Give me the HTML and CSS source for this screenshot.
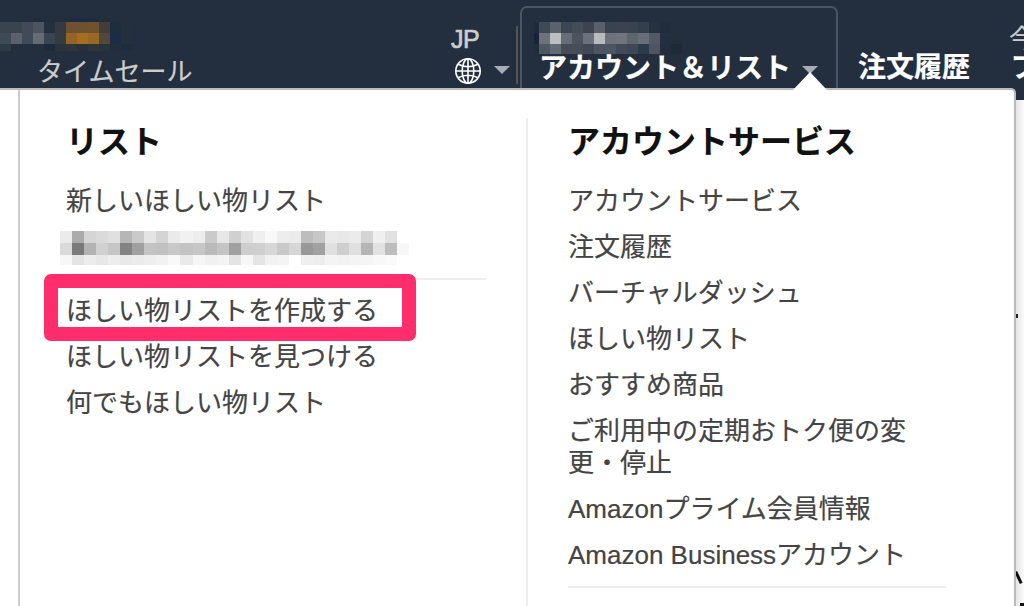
FILE: index.html
```html
<!DOCTYPE html>
<html lang="ja">
<head>
    <meta charset="UTF-8">
    <meta name="viewport" content="width=device-width, initial-scale=1.0">
    <title>アカウント&#xFF06;リスト</title>
    <link rel="stylesheet" href="styles.css">
</head>
<body>
    <header class="nav">
        <div class="nav-left">
            <div class="mosaic mosaic-name"></div>
            <a href="#">タイムセール</a>
        </div>
        <div class="nav-lang">
            <span>JP</span>
            <div class="globe">
                <svg width="28" height="28" viewBox="0 0 28 28">
                    <circle cx="14" cy="14" r="12.2"/>
                    <ellipse cx="14" cy="14" rx="5.8" ry="12.2"/>
                    <path d="M14 1.8v24.4M1.8 14h24.4M4 7.2q10 5 20 0M4 20.8q10-5 20 0"/>
                </svg>
                <i class="arrow"></i>
            </div>
        </div>
        <div class="nav-line"></div>
        <div class="nav-account">
            <div class="mosaic mosaic-user"></div>
            <a href="#">アカウント&#xFF06;リスト</a>
            <i class="arrow"></i>
        </div>
        <a class="nav-orders" href="#">注文履歴</a>
        <div class="nav-prime">
            <span>今</span>
            <a href="#">プ</a>
        </div>
    </header>

    <div class="page-behind">
        <span class="dot"></span>
        <span class="stroke"></span>
        <span class="stroke-end"></span>
    </div>

    <div class="flyout">
        <i class="flyout-arrow"></i>
        <div class="columns">
            <div class="column lists">
                <h2>リスト</h2>
                <ul>
                    <li><a href="#">新しいほしい物リスト</a></li>
                    <li><div class="mosaic mosaic-list"></div></li>
                </ul>
                <hr>
                <ul>
                    <li class="marked"><a href="#">ほしい物リストを作成する</a></li>
                    <li><a href="#">ほしい物リストを見つける</a></li>
                    <li><a href="#">何でもほしい物リスト</a></li>
                </ul>
            </div>
            <div class="column services">
                <h2>アカウントサービス</h2>
                <ul>
                    <li><a href="#">アカウントサービス</a></li>
                    <li><a href="#">注文履歴</a></li>
                    <li><a href="#">バーチャルダッシュ</a></li>
                    <li><a href="#">ほしい物リスト</a></li>
                    <li><a href="#">おすすめ商品</a></li>
                    <li><a href="#">ご利用中の定期おトク便の変更・停止</a></li>
                    <li><a href="#">Amazonプライム会員情報</a></li>
                    <li><a href="#">Amazon Businessアカウント</a></li>
                </ul>
                <hr>
            </div>
        </div>
    </div>

    <script src="script.js"></script>
</body>
</html>
```
FILE: styles.css
```css
*, *::after {
    box-sizing: border-box;
    margin: 0;
    padding: 0;
}
body {
    position: relative;
    height: 606px;
    overflow: hidden;
    background: #fff;
    color: #444;
    font: 26px/32px "Liberation Sans", "Noto Sans CJK JP", sans-serif;
    -webkit-text-stroke: .2px;
}
a {
    color: inherit;
    text-decoration: none;
}
ul {
    list-style: none;
}
.nav {
    display: flex;
    width: 100%;
    height: 100px;
    overflow: hidden;
    background: #232f3e;
    color: #ccc;
    white-space: nowrap;
}
.nav > * {
    flex: none;
}
.nav-left {
    width: 451px;
    padding-top: 18px;
}
.nav-left a {
    display: block;
    margin: 2px 0 0 37px;
}
.nav-lang {
    width: 65px;
    padding-top: 23px;
}
.nav-lang > span {
    display: block;
    height: 34px;
    font-size: 25px;
    letter-spacing: -.5px;
    -webkit-text-stroke: .7px #ccc;
}
.globe {
    display: flex;
    align-items: center;
    gap: 12px;
    margin-left: 3px;
}
.globe svg {
    flex: none;
    fill: none;
    stroke: #fff;
    stroke-width: 1.6;
}
.arrow {
    flex: none;
    border: 8px solid transparent;
    border-top-color: #a7acb2;
    border-bottom: 0;
}
.globe .arrow {
    margin-bottom: 2px;
}
.nav-line {
    width: 2px;
    height: 58px;
    margin: 26px 2px 0 0;
    background: #555;
}
.nav-account {
    display: flex;
    flex-wrap: wrap;
    align-content: flex-start;
    align-items: center;
    width: 318px;
    height: 100px;
    margin-top: 6px;
    padding: 10px 0 0 12px;
    border: 2px solid #4c5662;
    border-radius: 7px;
    color: #fff;
}
.nav-account a {
    width: 261px;
    margin-top: -1px;
    padding-left: 5px;
    font-size: 28px;
    font-weight: bold;
}
.nav-account .arrow {
    margin: 0 0 0 7px;
}
.nav-orders {
    width: 171px;
    padding: 52px 0 0 20px;
    color: #fff;
    font-size: 28px;
    font-weight: bold;
}
.nav-prime {
    padding-top: 23px;
}
.nav-prime span {
    display: block;
}
.nav-prime a {
    display: block;
    margin-top: -3px;
    padding-left: 2px;
    color: #fff;
    font-size: 28px;
    font-weight: bold;
}

/* mosaics */
.mosaic {
    display: grid;
    width: max-content;
}
.mosaic-name {
    grid-template: 4px 11px 11px 7px / repeat(13, 11px);
    height: 36px;
}
.mosaic-user {
    grid-template: 11px 11px 10px / 5px repeat(13, 11px);
    width: 300px;
    margin: 4px 0 0;
}
.mosaic-list {
    grid-template: 12px 12px 10px / repeat(29, 12.05px);
    height: 32px;
    margin-left: -6px;
}

/* what shows right of the menu */
.page-behind {
    position: absolute;
    top: 100px;
    right: 0;
    width: 8px;
    height: 506px;
    overflow: hidden;
    background: linear-gradient(to right, #e6e6e6, #fafafa);
}
.dot {
    position: absolute;
    top: 214px;
    left: 0;
    width: 2px;
    height: 4px;
    background: #222;
}
.stroke {
    position: absolute;
    top: 471px;
    left: 1px;
    width: 3px;
    height: 13px;
    background: #111;
    transform: rotate(-25deg);
}
.stroke-end {
    position: absolute;
    top: 503px;
    left: 4px;
    width: 4px;
    height: 3px;
    background: #111;
}

/* menu */
.flyout {
    position: absolute;
    top: 88px;
    left: 0;
    width: 1016px;
    height: 530px;
    padding-left: 18px;
    border-top: 2px solid #bbb;
    border-right: 2px solid #bbb;
    border-top-right-radius: 5px;
    background: #fff;
}
.flyout-arrow {
    position: absolute;
    top: -18px;
    left: 793px;
    border: 17px solid transparent;
    border-top: 0;
    border-bottom: 18px solid #fff;
}
.columns {
    display: flex;
    height: 100%;
    padding-top: 28px;
    border-left: 2px solid #ccc;
}
.column {
    padding-top: 6px;
}
.lists {
    width: 506px;
    padding-left: 46px;
    padding-right: 40px;
}
.services {
    width: 420px;
    padding-left: 40px;
    border-left: 2px solid #eee;
}
h2 {
    height: 61px;
    color: #111;
    font-size: 32px;
    line-height: 36px;
}
li {
    position: relative;
    min-height: 32px;
    margin-bottom: 14px;
}
.services li {
    width: 350px;
}
hr {
    height: 2px;
    margin: 15px 0;
    border: 0;
    background: #eee;
}
.marked::after {
    content: "";
    position: absolute;
    top: -21px;
    left: -22px;
    width: 372px;
    height: 67px;
    border: 14px solid #ff2d6b;
    border-radius: 7px;
}
```
FILE: script.js
```js
const $ = s => document.querySelector(s);

const fill = (el, rows) => {
    rows.join(' ').trim().split(/\s+/).forEach(color => {
        const cell = document.createElement('span');
        cell.style.background = color === '-' ? 'none' : '#' + color;
        el.appendChild(cell);
    });
};

fill($('.mosaic-name'), [
    '- - - 212c3b 222d3e - 1e2b40 1c2a42 1e2b40 222d3e - - -',
    '3a444f 3a444f 414a56 4d5560 242f42 343a40 6d522f 6d522f 70532e 403f39 1f2d3f 25303e -',
    '404956 5b606c 404b57 646b72 384450 363c3e 956424 a56e20 996824 52483a 1d2c46 25303f 222f40',
    '2f3a47 - - 232f3c 1e293b 2a323b 2d343a 28313b 2e343a 2a323b 222e3d 202b3c -'
]);

fill($('.mosaic-user'), [
    '1f2b3c 404a57 5b626c 3d4754 424d58 3d4450 5a606b 39434f 3b434f 39434e 333f4c 263240 202d3c -',
    '182338 6c727c bcbfc0 676e78 4d545f 6c727c b9bcbe 6e737c 70757d 5c666d 686f78 535a65 - 242f3d',
    '202d3b 4d5861 626a73 474d58 484e58 424954 4b5660 4b5660 424b57 3e4854 2d3a49 4d5561 222e3d 1f2a39'
]);

fill($('.mosaic-list'), [
    'ebebeb ababab d5d5d5 dadada e0e0e0 b6b6b6 cacaca e4e4e4 d4d4d4 eaeaea f1f1f1 ededed cacaca e7e7e7 d0d0d0 e2e2e2 efefef f8f8f8 ededed ebebeb bdbdbd c7c7c7 eaeaea e8e8e8 ebebeb d4d4d4 efefef e1e1e1 -',
    'dadada 7a7a7a b3b3b3 d0d0d0 c6c6c6 838383 a0a0a0 c3c3c3 c1c1c1 c8c8c8 c3c3c3 c6c6c6 bababa c4c4c4 a0a0a0 cecece cfcfcf d7d7d7 c9c9c9 d6d6d6 989898 a1a1a1 e0e0e0 cecece dfdfdf b5b5b5 e1e1e1 bdbdbd f7f7f7',
    'f7f7f7 e4e4e4 ececec e7e7e7 ededed e9e9e9 ebebeb eeeeee f2f2f2 f9f9f9 eaeaea f5f5f5 f1f1f1 f3f3f3 e4e4e4 f7f7f7 e5e5e5 f2f2f2 f4f4f4 - efefef ededed f4f4f4 f2f2f2 f4f4f4 f5f5f5 f8f8f8 fafafa -'
]);
```
